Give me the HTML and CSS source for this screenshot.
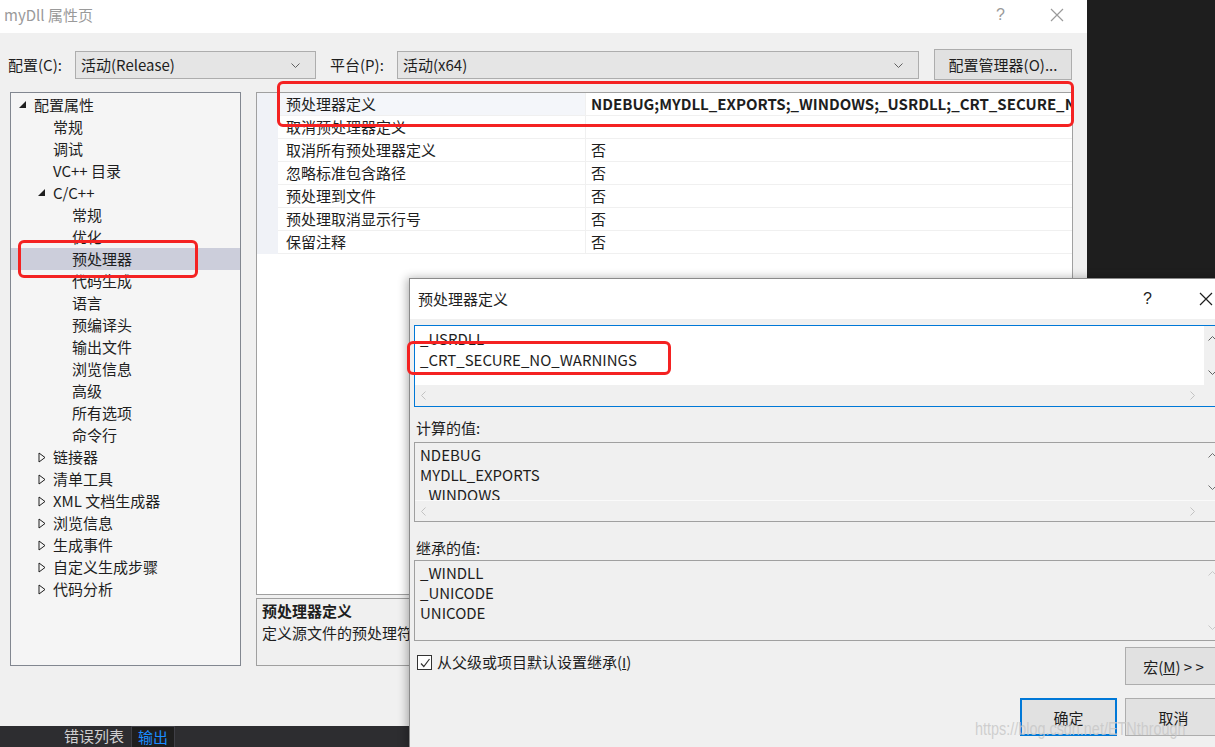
FILE: index.html
```html
<!DOCTYPE html>
<html lang="zh-CN">
<head>
    <meta charset="UTF-8">
    <meta name="viewport" content="width=device-width, initial-scale=1.0">
    <title>myDll 属性页</title>
    <link rel="stylesheet" href="styles.css">
</head>
<body>
<div class="screen">
    <div class="top">
        <div class="window">
            <div class="titlebar">
                <span class="title">myDll 属性页</span>
                <div class="title-btns">
                    <span class="help">?</span>
                    <svg class="close" width="14" height="14" viewBox="0 0 14 14"><path d="M1 1L13 13M13 1L1 13" stroke="#9a9a9a" stroke-width="1.2" fill="none"/></svg>
                </div>
            </div>

            <div class="toolbar">
                <span class="tb-label">配置(C):</span>
                <div class="combo combo-config">
                    <span>活动(Release)</span>
                    <svg width="9" height="5" viewBox="0 0 9 5"><path d="M0.5 0.5L4.5 4.5L8.5 0.5" stroke="#606060" fill="none"/></svg>
                </div>
                <span class="tb-label tb-platform">平台(P):</span>
                <div class="combo combo-platform">
                    <span>活动(x64)</span>
                    <svg width="9" height="5" viewBox="0 0 9 5"><path d="M0.5 0.5L4.5 4.5L8.5 0.5" stroke="#606060" fill="none"/></svg>
                </div>
                <button class="btn btn-manager">配置管理器(O)...</button>
            </div>

            <div class="main">
                <div class="tree">
                    <div class="node lvl1"><span class="toggle"><svg width="8" height="8" viewBox="0 0 8 8"><path d="M7 0V7H0Z" fill="#1e1e1e"/></svg></span>配置属性</div>
                    <div class="node lvl2"><span class="toggle"></span>常规</div>
                    <div class="node lvl2"><span class="toggle"></span>调试</div>
                    <div class="node lvl2"><span class="toggle"></span>VC++ 目录</div>
                    <div class="node lvl2"><span class="toggle"><svg width="8" height="8" viewBox="0 0 8 8"><path d="M7 0V7H0Z" fill="#1e1e1e"/></svg></span>C/C++</div>
                    <div class="node lvl3">常规</div>
                    <div class="node lvl3">优化</div>
                    <div class="node lvl3 selected">预处理器</div>
                    <div class="node lvl3">代码生成</div>
                    <div class="node lvl3">语言</div>
                    <div class="node lvl3">预编译头</div>
                    <div class="node lvl3">输出文件</div>
                    <div class="node lvl3">浏览信息</div>
                    <div class="node lvl3">高级</div>
                    <div class="node lvl3">所有选项</div>
                    <div class="node lvl3">命令行</div>
                    <div class="node lvl2"><span class="toggle"><svg width="8" height="11" viewBox="0 0 8 11"><path d="M1 1L7 5.5L1 10Z" stroke="#1e1e1e" fill="none"/></svg></span>链接器</div>
                    <div class="node lvl2"><span class="toggle"><svg width="8" height="11" viewBox="0 0 8 11"><path d="M1 1L7 5.5L1 10Z" stroke="#1e1e1e" fill="none"/></svg></span>清单工具</div>
                    <div class="node lvl2"><span class="toggle"><svg width="8" height="11" viewBox="0 0 8 11"><path d="M1 1L7 5.5L1 10Z" stroke="#1e1e1e" fill="none"/></svg></span>XML 文档生成器</div>
                    <div class="node lvl2"><span class="toggle"><svg width="8" height="11" viewBox="0 0 8 11"><path d="M1 1L7 5.5L1 10Z" stroke="#1e1e1e" fill="none"/></svg></span>浏览信息</div>
                    <div class="node lvl2"><span class="toggle"><svg width="8" height="11" viewBox="0 0 8 11"><path d="M1 1L7 5.5L1 10Z" stroke="#1e1e1e" fill="none"/></svg></span>生成事件</div>
                    <div class="node lvl2"><span class="toggle"><svg width="8" height="11" viewBox="0 0 8 11"><path d="M1 1L7 5.5L1 10Z" stroke="#1e1e1e" fill="none"/></svg></span>自定义生成步骤</div>
                    <div class="node lvl2"><span class="toggle"><svg width="8" height="11" viewBox="0 0 8 11"><path d="M1 1L7 5.5L1 10Z" stroke="#1e1e1e" fill="none"/></svg></span>代码分析</div>
                </div>

                <div class="right">
                    <div class="grid">
                        <div class="row current">
                            <div class="strip"></div>
                            <div class="name">预处理器定义</div>
                            <div class="value bold">NDEBUG;MYDLL_EXPORTS;_WINDOWS;_USRDLL;_CRT_SECURE_NO_WARNINGS;%(PreprocessorDefinitions)</div>
                        </div>
                        <div class="row">
                            <div class="strip"></div>
                            <div class="name">取消预处理器定义</div>
                            <div class="value"></div>
                        </div>
                        <div class="row">
                            <div class="strip"></div>
                            <div class="name">取消所有预处理器定义</div>
                            <div class="value">否</div>
                        </div>
                        <div class="row">
                            <div class="strip"></div>
                            <div class="name">忽略标准包含路径</div>
                            <div class="value">否</div>
                        </div>
                        <div class="row">
                            <div class="strip"></div>
                            <div class="name">预处理到文件</div>
                            <div class="value">否</div>
                        </div>
                        <div class="row">
                            <div class="strip"></div>
                            <div class="name">预处理取消显示行号</div>
                            <div class="value">否</div>
                        </div>
                        <div class="row">
                            <div class="strip"></div>
                            <div class="name">保留注释</div>
                            <div class="value">否</div>
                        </div>
                    </div>
                    <div class="desc">
                        <div class="desc-title">预处理器定义</div>
                        <div class="desc-text">定义源文件的预处理符号。</div>
                    </div>
                </div>
            </div>
        </div>
        <div class="backdrop"></div>
    </div>

    <div class="taskbar">
        <span class="tab">错误列表</span>
        <span class="tab active">输出</span>
    </div>

    <div class="dialog">
        <div class="dlg-title">
            <span>预处理器定义</span>
            <div class="dlg-btns">
                <span class="help">?</span>
                <svg width="14" height="14" viewBox="0 0 14 14"><path d="M1 1L13 13M13 1L1 13" stroke="#1e1e1e" stroke-width="1.2" fill="none"/></svg>
            </div>
        </div>
        <div class="dlg-body">
            <div class="listbox edit">
                <div class="lb-main">
                    <div class="lb-view">
                        <div class="lb-lines scrolled">
                            <div>_USRDLL</div>
                            <div>_CRT_SECURE_NO_WARNINGS</div>
                        </div>
                    </div>
                    <div class="vscroll">
                        <svg width="9" height="5" viewBox="0 0 9 5"><path d="M0.5 4.5L4.5 0.5L8.5 4.5" stroke="#606060" fill="none"/></svg>
                        <svg width="9" height="5" viewBox="0 0 9 5"><path d="M0.5 0.5L4.5 4.5L8.5 0.5" stroke="#606060" fill="none"/></svg>
                    </div>
                </div>
                <div class="hscroll">
                    <svg width="5" height="9" viewBox="0 0 5 9"><path d="M4.5 0.5L0.5 4.5L4.5 8.5" stroke="#c2c2c2" fill="none"/></svg>
                    <svg width="5" height="9" viewBox="0 0 5 9"><path d="M0.5 0.5L4.5 4.5L0.5 8.5" stroke="#c2c2c2" fill="none"/></svg>
                </div>
            </div>

            <div class="field-label">计算的值:</div>
            <div class="listbox computed">
                <div class="lb-main">
                    <div class="lb-view">
                        <div class="lb-lines">
                            <div>NDEBUG</div>
                            <div>MYDLL_EXPORTS</div>
                            <div>_WINDOWS</div>
                            <div>_USRDLL</div>
                        </div>
                    </div>
                    <div class="vscroll">
                        <svg width="9" height="5" viewBox="0 0 9 5"><path d="M0.5 4.5L4.5 0.5L8.5 4.5" stroke="#707070" fill="none"/></svg>
                        <svg width="9" height="5" viewBox="0 0 9 5"><path d="M0.5 0.5L4.5 4.5L8.5 0.5" stroke="#707070" fill="none"/></svg>
                    </div>
                </div>
                <div class="hscroll">
                    <svg width="5" height="9" viewBox="0 0 5 9"><path d="M4.5 0.5L0.5 4.5L4.5 8.5" stroke="#c2c2c2" fill="none"/></svg>
                    <svg width="5" height="9" viewBox="0 0 5 9"><path d="M0.5 0.5L4.5 4.5L0.5 8.5" stroke="#c2c2c2" fill="none"/></svg>
                </div>
            </div>

            <div class="field-label inherited-label">继承的值:</div>
            <div class="listbox inherited">
                <div class="lb-main">
                    <div class="lb-view">
                        <div class="lb-lines">
                            <div>_WINDLL</div>
                            <div>_UNICODE</div>
                            <div>UNICODE</div>
                        </div>
                    </div>
                    <div class="vscroll">
                        <svg width="9" height="5" viewBox="0 0 9 5"><path d="M0.5 4.5L4.5 0.5L8.5 4.5" stroke="#c8c8c8" fill="none"/></svg>
                        <svg width="9" height="5" viewBox="0 0 9 5"><path d="M0.5 0.5L4.5 4.5L8.5 0.5" stroke="#c8c8c8" fill="none"/></svg>
                    </div>
                </div>
            </div>

            <div class="option-row">
                <label class="check">
                    <span class="box"><svg width="12" height="12" viewBox="0 0 12 12"><path d="M2 6.5L4.8 9.5L10.5 2" stroke="#333" stroke-width="1.2" fill="none"/></svg></span>
                    <span>从父级或项目默认设置继承(<u class="latin">I</u>)</span>
                </label>
                <button class="btn dlg-btn">宏(<u>M</u>) &gt; &gt;</button>
            </div>

            <div class="actions">
                <button class="btn dlg-btn default">确定</button>
                <button class="btn dlg-btn">取消</button>
            </div>
        </div>
    </div>

    <div class="watermark">https://blog.csdn.net/ETNthrough</div>

    <div class="mark mark-grid"></div>
    <div class="mark mark-tree"></div>
    <div class="mark mark-dialog"></div>
</div>
</body>
</html>
```

FILE: styles.css
```css
* {
    box-sizing: border-box;
}

body {
    margin: 0;
    background-color: #1e1e1e;
    font-family: "Noto Sans CJK SC", "Noto Sans", sans-serif;
    font-size: 15px;
    color: #1e1e1e;
}

.screen {
    position: relative;
    width: 1215px;
    height: 747px;
    overflow: hidden;
}

.top {
    display: flex;
    height: 726px;
}

.window {
    width: 1087px;
    height: 726px;
    background-color: #f0f0f0;
    display: flex;
    flex-direction: column;
}

.backdrop {
    flex: 1;
    background-color: #1e1e1e;
}

/* title bar */
.titlebar {
    height: 33px;
    background-color: #fff;
    display: flex;
    align-items: center;
    justify-content: space-between;
    padding: 0 23px 4px 4px;
    color: #9a9a9a;
    line-height: 20px;
}

.title-btns {
    display: flex;
    align-items: center;
    gap: 45px;
}

.help {
    font-family: "Liberation Sans", sans-serif;
    font-size: 16px;
}

/* config row */
.toolbar {
    height: 55px;
    display: flex;
    align-items: flex-start;
    padding: 16px 0 0 8px;
}

.tb-label {
    width: 67px;
    line-height: 31px;
}

.tb-platform {
    margin-left: 14px;
}

.combo {
    margin-top: 2px;
    height: 28px;
    background-color: #e5e5e5;
    border: 1px solid #adadad;
    display: flex;
    align-items: center;
    justify-content: space-between;
    padding: 0 15px 0 5px;
    line-height: 26px;
}

.combo-config {
    width: 241px;
}

.combo-platform {
    width: 522px;
}

.btn {
    font-family: "Noto Sans CJK SC", "Noto Sans", sans-serif;
    font-size: 15px;
    color: #1e1e1e;
    background-color: #e1e1e1;
    border: 1px solid #adadad;
    padding: 0;
}

.btn-manager {
    margin-left: 15px;
    width: 138px;
    height: 31px;
}

/* tree + grid */
.main {
    flex: 1;
    display: flex;
}

.tree {
    margin: 4px 0 0 10px;
    width: 231px;
    height: 574px;
    background-color: #f5f5f5;
    border: 1px solid #828790;
    padding-top: 1px;
}

.node {
    height: 22px;
    line-height: 22px;
    display: flex;
    align-items: center;
    white-space: nowrap;
}

.node.lvl1 {
    padding-left: 8px;
}

.node.lvl2 {
    padding-left: 27px;
}

.node.lvl3 {
    padding-left: 61px;
}

.node.selected {
    background-color: #cccedb;
}

.toggle {
    width: 15px;
    height: 22px;
    display: flex;
    align-items: center;
}

.right {
    margin: 4px 0 0 15px;
    width: 817px;
    display: flex;
    flex-direction: column;
}

.grid {
    height: 503px;
    background-color: #fff;
    border: 1px solid #a0a0a0;
    overflow: hidden;
}

.row {
    display: flex;
    height: 23px;
    line-height: 22px;
}

.strip {
    width: 21px;
    background-color: #f0f2f7;
}

.row .name {
    width: 307px;
    padding-left: 8px;
    border-bottom: 1px solid #f0f0f0;
    white-space: nowrap;
}

.row.current .name {
    background-color: #f4f6fa;
}

.row .value {
    flex: 1;
    padding-left: 5px;
    border-left: 1px solid #f0f0f0;
    border-bottom: 1px solid #f0f0f0;
    white-space: nowrap;
    overflow: hidden;
}

.bold {
    font-weight: bold;
}

.desc {
    margin-top: 3px;
    height: 68px;
    background-color: #f0f0f0;
    border: 1px solid #a0a0a0;
    padding: 1px 5px 0;
    line-height: 22px;
}

.desc-title {
    font-weight: bold;
}

/* bottom tool tabs */
.taskbar {
    height: 21px;
    background-color: #2d2d30;
    display: flex;
    padding-left: 64px;
    gap: 7px;
    line-height: 20px;
}

.tab {
    color: #d0d0d0;
}

.tab.active {
    background-color: #1e1e1e;
    border: 1px solid #3f3f46;
    border-bottom: none;
    color: #1a8cff;
    padding: 0 6px;
}

/* dialog window */
.dialog {
    position: absolute;
    left: 409px;
    top: 278px;
    width: 818px;
    height: 472px;
    background-color: #f0f0f0;
    border: 1px solid #8a8a8a;
    box-shadow: -2px 0 9px rgba(0, 0, 0, 0.3);
}

.dlg-title {
    height: 40px;
    background-color: #fff;
    display: flex;
    align-items: center;
    padding: 0 13px 0 8px;
    line-height: 20px;
}

.dlg-btns {
    margin-left: auto;
    display: flex;
    align-items: center;
    gap: 47px;
}

.dlg-body {
    padding: 6px 4px 0;
    display: flex;
    flex-direction: column;
}

.listbox {
    border: 1px solid #a0a0a0;
    display: flex;
    flex-direction: column;
    line-height: 20px;
}

.listbox.edit {
    height: 82px;
    border-color: #0078d7;
}

.listbox.computed {
    height: 80px;
    margin-top: 4px;
}

.listbox.inherited {
    height: 81px;
    margin-top: 2px;
}

.lb-main {
    flex: 1;
    display: flex;
    min-height: 0;
}

.lb-view {
    flex: 1;
    overflow: hidden;
    padding-left: 5px;
}

.edit .lb-view {
    background-color: #fff;
    border-top: 7px solid #fff;
}

.lb-lines {
    padding-top: 2px;
}

.lb-lines.scrolled {
    padding-top: 0;
    margin-top: -5px;
}

.edit .lb-lines div {
    line-height: 21px;
}

.vscroll {
    width: 17px;
    display: flex;
    flex-direction: column;
    justify-content: space-between;
    align-items: center;
    padding: 10px 0 10px;
    background-color: #f0f0f0;
}

.hscroll {
    height: 21px;
    display: flex;
    align-items: center;
    justify-content: space-between;
    padding: 0 26px 0 6px;
    background-color: #f0f0f0;
}

.computed .hscroll {
    border-top: 1px solid #fafafa;
}

.field-label {
    margin-top: 11px;
    padding-left: 2px;
    line-height: 20px;
}

.inherited-label {
    margin-top: 16px;
}

.option-row {
    margin-top: 6px;
    display: flex;
    align-items: flex-start;
}

.check {
    margin: 7px 0 0 3px;
    display: flex;
    align-items: center;
    gap: 5px;
    line-height: 16px;
}

.check .box {
    width: 15px;
    height: 15px;
    border: 1px solid #333;
    background-color: #fff;
    display: flex;
    align-items: center;
    justify-content: center;
}

.latin {
    font-family: "Liberation Sans", sans-serif;
}

.dlg-btn {
    width: 97px;
    height: 38px;
}

.option-row .dlg-btn {
    margin-left: auto;
}

.actions {
    margin-top: 13px;
    display: flex;
    justify-content: flex-end;
    gap: 8px;
}

.dlg-btn.default {
    border: 2px solid #0078d7;
}

.watermark {
    position: absolute;
    left: 975px;
    top: 719px;
    font-family: "Liberation Sans", sans-serif;
    font-size: 18px;
    color: rgba(200, 200, 200, 0.85);
    transform: scaleX(0.8);
    transform-origin: left center;
    white-space: nowrap;
}

/* red annotation boxes */
.mark {
    position: absolute;
    border: 3px solid #f42222;
    border-radius: 6px;
}

.mark-grid {
    left: 277px;
    top: 81px;
    width: 797px;
    height: 46px;
}

.mark-tree {
    left: 18px;
    top: 240px;
    width: 180px;
    height: 38px;
}

.mark-dialog {
    left: 407px;
    top: 341px;
    width: 264px;
    height: 34px;
}
```
